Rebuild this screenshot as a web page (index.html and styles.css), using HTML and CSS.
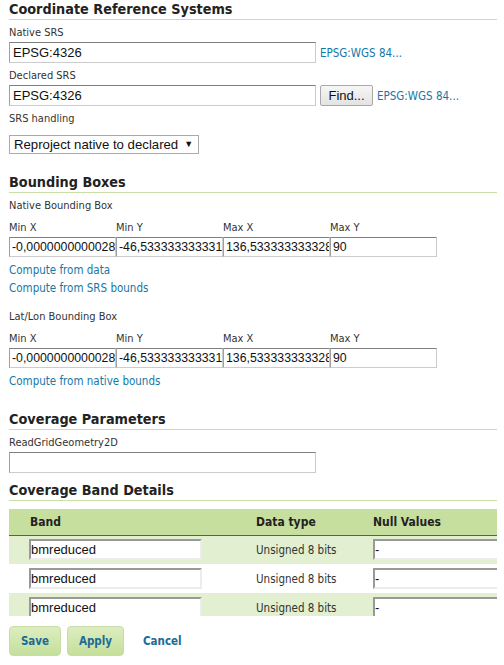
FILE: index.html
```html
<!DOCTYPE html>
<html>
<head>
<meta charset="utf-8">
<link rel="stylesheet" href="styles.css">
</head>
<body>
<div class="page">
  <h3 class="sec first">Coordinate Reference Systems</h3>
  <div class="lbl">Native SRS</div>
  <div class="fieldrow">
    <input class="txt wide" value="EPSG:4326">
    <a class="link srslink">EPSG:WGS 84...</a>
  </div>
  <div class="lbl">Declared SRS</div>
  <div class="fieldrow">
    <input class="txt wide" value="EPSG:4326">
    <button class="find">Find...</button>
    <a class="link srslink2">EPSG:WGS 84...</a>
  </div>
  <div class="lbl">SRS handling</div>
  <div class="select">Reproject native to declared <span class="arrow">▼</span></div>

  <h3 class="sec bb">Bounding Boxes</h3>
  <div class="lbl">Native Bounding Box</div>
  <div class="bbox">
    <div class="blbl">Min X</div><div class="blbl">Min Y</div><div class="blbl">Max X</div><div class="blbl">Max Y</div>
    <input class="num" value="-0,0000000000028"><input class="num" value="-46,533333333331"><input class="num" value="136,533333333328"><input class="num" value="90">
  </div>
  <div class="links">
    <a class="link">Compute from data</a>
    <a class="link">Compute from SRS bounds</a>
  </div>
  <div class="lbl ll">Lat/Lon Bounding Box</div>
  <div class="bbox">
    <div class="blbl">Min X</div><div class="blbl">Min Y</div><div class="blbl">Max X</div><div class="blbl">Max Y</div>
    <input class="num" value="-0,0000000000028"><input class="num" value="-46,533333333331"><input class="num" value="136,533333333328"><input class="num" value="90">
  </div>
  <div class="links">
    <a class="link">Compute from native bounds</a>
  </div>

  <h3 class="sec cp">Coverage Parameters</h3>
  <div class="lbl">ReadGridGeometry2D</div>
  <div class="fieldrow">
    <input class="txt wide" value="">
  </div>

  <h3 class="sec cb">Coverage Band Details</h3>
  <div class="tablewrap">
    <table class="bands">
      <thead>
        <tr><th class="c1">Band</th><th class="c2">Data type</th><th class="c3">Null Values</th></tr>
      </thead>
      <tbody>
        <tr class="odd"><td class="c1"><input class="bin" value="bmreduced"></td><td class="c2">Unsigned 8 bits</td><td class="c3"><input class="bin" value="-"></td></tr>
        <tr class="even"><td class="c1"><input class="bin" value="bmreduced"></td><td class="c2">Unsigned 8 bits</td><td class="c3"><input class="bin" value="-"></td></tr>
        <tr class="odd"><td class="c1"><input class="bin" value="bmreduced"></td><td class="c2">Unsigned 8 bits</td><td class="c3"><input class="bin" value="-"></td></tr>
      </tbody>
    </table>
  </div>

  <div class="buttons">
    <button class="gbtn save">Save</button>
    <button class="gbtn apply">Apply</button>
    <a class="cancel">Cancel</a>
  </div>
</div>
</body>
</html>
```
FILE: styles.css
```css
* { box-sizing: border-box; }
html, body { margin: 0; padding: 0; background: #fff; }
body {
  font-family: "DejaVu Sans Condensed", "DejaVu Sans", sans-serif;
  font-size: 11px;
  color: #333;
  width: 504px;
  height: 665px;
  overflow: hidden;
}
.page { padding-left: 9px; width: 497px; }

.sec {
  margin: 0;
  font-size: 14.3px;
  line-height: 19px;
  height: 20px;
  font-weight: bold;
  color: #222;
  border-bottom: 1px solid #c9dfa5;
}
.sec.first { margin-top: 0; }
.sec.bb { margin-top: 19px; }
.sec.cp { margin-top: 20px; }
.sec.cb { margin-top: 8px; }

.lbl { margin-top: 6px; line-height: 14px; height: 14px; }
.lbl.ll { margin-top: 13px; }

.fieldrow { display: flex; align-items: center; margin-top: 2px; height: 21px; }

.txt {
  font-family: "Liberation Sans", Arial, sans-serif;
  font-size: 13px;
  height: 21px;
  padding: 0 3px;
  border: 1px solid #ccc;
  border-top-color: #7f7f7f;
  border-left-color: #a0a0a0;
  color: #111;
  background: #fff;
  outline: none;
}
.wide { width: 307px; }

.link { color: #1677a6; text-decoration: none; font-size: 11.5px; }
.srslink { margin-left: 4px; }
.srslink2 { margin-left: 4px; }

.find {
  margin-left: 4px;
  width: 53px;
  height: 21px;
  padding: 0;
  font-family: "Liberation Sans", Arial, sans-serif;
  font-size: 13px;
  color: #111;
  background: linear-gradient(#f6f6f6, #e3e3e3);
  border: 1px solid #a9a9a9;
  border-radius: 2px;
}

.select {
  margin-top: 9px;
  width: 190px;
  height: 19px;
  border: 1px solid #aaa;
  background: #fff;
  font-family: "Liberation Sans", Arial, sans-serif;
  font-size: 13.2px;
  line-height: 17px;
  padding-left: 4px;
  color: #111;
  display: flex;
  align-items: center;
  gap: 6px;
  white-space: nowrap;
}
.arrow { font-size: 9px; }

.bbox {
  display: grid;
  grid-template-columns: 107px 107px 107px 107px;
  grid-template-rows: 14px 20px;
  row-gap: 2px;
  margin-top: 8px;
}
.blbl { line-height: 14px; }
.num {
  font-family: "Liberation Sans", Arial, sans-serif;
  font-size: 12.3px;
  width: 107px;
  height: 20px;
  padding: 0 0 0 2px;
  border: 1px solid #ccc;
  border-top-color: #7f7f7f;
  border-left-color: #a0a0a0;
  color: #111;
  outline: none;
}

.links { display: flex; flex-direction: column; margin-top: 4px; }
.links .link { line-height: 18px; }

.tablewrap {
  margin-top: 8px;
  width: 488px;
  height: 107px;
  overflow: hidden;
}
.bands {
  border-collapse: collapse;
  table-layout: fixed;
  width: 560px;
}
.bands th {
  background: #c7df9e;
  height: 26px;
  text-align: left;
  font-size: 12px;
  color: #222;
  border-bottom: 1px solid #1f6f9e;
  padding-top: 0;
  padding-bottom: 0;
}
.bands td { height: 29px; padding-top: 0; padding-bottom: 0; font-size: 11.5px; color: #333; }
.c1 { width: 241px; padding-left: 20px; }
.c2 { width: 120px; padding-left: 6px; }
.c3 { width: 199px; padding-left: 3px; }
.bands th.c1 { padding-left: 21px; }
tr.odd td { background: #e2efd0; }
tr.even td { background: #fff; }
.bin {
  display: block;
  font-family: "Liberation Sans", Arial, sans-serif;
  font-size: 13px;
  width: 173px;
  height: 21px;
  padding: 0;
  border: 2px solid #ececec;
  border-top-color: #999;
  border-left-color: #999;
  color: #111;
  background: #fff;
  outline: none;
}

.buttons { display: flex; align-items: center; margin-top: 10px; height: 30px; }
.gbtn {
  height: 30px;
  padding: 0;
  border: 1px solid #c8dca8;
  border-radius: 4px;
  background: linear-gradient(#dcedc0, #c4df9b);
  color: #1c6a97;
  font-family: "DejaVu Sans Condensed", "DejaVu Sans", sans-serif;
  font-weight: bold;
  font-size: 11.5px;
}
.save { width: 52px; }
.apply { width: 57px; margin-left: 6px; }
.cancel {
  margin-left: 19px;
  color: #1c6a97;
  font-weight: bold;
  font-size: 11.5px;
}
```
